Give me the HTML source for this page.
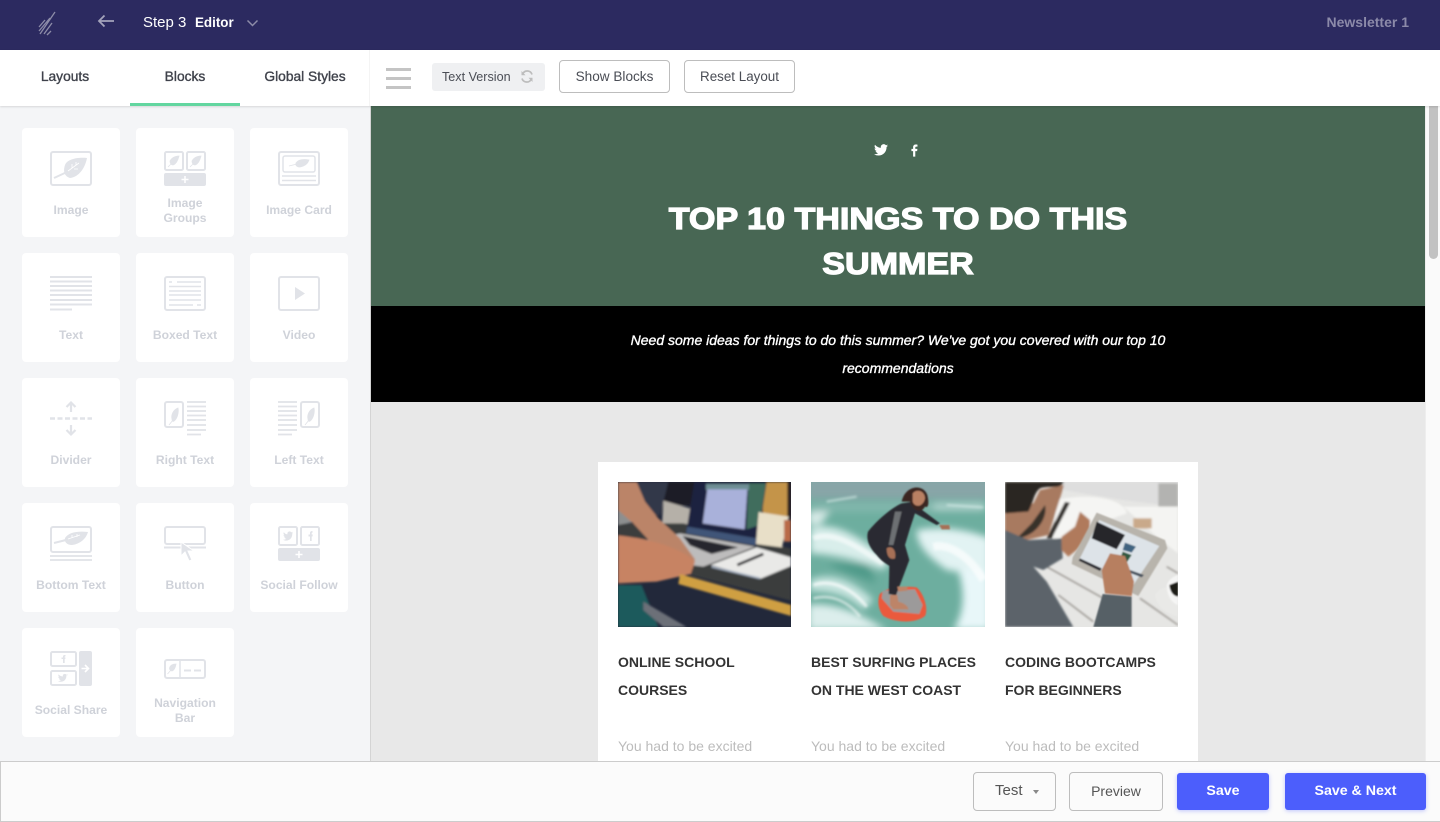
<!DOCTYPE html>
<html><head><meta charset="utf-8"><title>Editor</title>
<style>
*{box-sizing:border-box}
html,body{margin:0;padding:0;width:1440px;height:822px;overflow:hidden;background:#fff;font-family:"Liberation Sans",sans-serif}
.a{position:absolute}
.t{position:absolute;white-space:nowrap}
.card{position:absolute;width:98px;height:109px;background:#fff;border-radius:4px}
.card svg{position:absolute;left:28px;top:23px;width:42px;height:35px;overflow:visible}
.lb{position:absolute;left:-10px;right:-10px;top:74px;text-align:center;font-size:12.1px;font-weight:700;line-height:16px;color:#cfd2d9}
.lb.two{top:68px;line-height:15px}
.btn{position:absolute;border:1px solid #bdbdbd;border-radius:4px;background:#fff;color:#4a4d55;text-align:center}
.blue{position:absolute;background:#4c5efc;border-radius:3px;color:#fff;font-weight:700;font-size:14.2px;text-align:center;box-shadow:0 1px 4px rgba(76,94,252,.35)}
.ct{position:absolute;font-size:14px;font-weight:700;line-height:28px;color:#333;white-space:nowrap;top:648px}
.cb{position:absolute;font-size:14px;line-height:28px;color:#bcbcbc;white-space:nowrap;top:732px}
.tab{position:absolute;top:69px;text-align:center;font-size:13.8px;line-height:16px;color:#3f424b;-webkit-text-stroke:.35px #3f424b;white-space:nowrap}
svg{display:block}
</style></head><body>
<svg width="0" height="0" style="position:absolute"><defs>
<filter id="b0" x="-5%" y="-5%" width="110%" height="110%"><feGaussianBlur stdDeviation="2"/></filter>
<filter id="b1" x="-5%" y="-5%" width="110%" height="110%"><feGaussianBlur stdDeviation="3.5"/></filter>
<filter id="b2" x="-10%" y="-10%" width="120%" height="120%"><feGaussianBlur stdDeviation="11"/></filter>
<filter id="b3" x="-5%" y="-5%" width="110%" height="110%"><feGaussianBlur stdDeviation="4"/></filter>
</defs></svg>

<!-- main area -->
<div class="a" style="left:371px;top:106px;width:1054px;height:200px;background:#486754"></div>
<div class="a" style="left:371px;top:306px;width:1054px;height:96px;background:#000"></div>
<div class="a" style="left:371px;top:402px;width:1054px;height:360px;background:#e8e8e8"></div>
<div class="a" style="left:1425px;top:106px;width:15px;height:656px;background:#fafafa;border-left:1px solid #eee"></div>
<div class="a" style="left:1429px;top:106px;width:9px;height:153px;background:#c2c2c2;border-radius:0 0 5px 5px"></div>
<div class="a" style="left:598px;top:462px;width:600px;height:300px;background:#fff"></div>

<svg class="a" style="left:874px;top:144px" width="14" height="12" viewBox="0 0 24 20"><path fill="#fff" d="M24 2.4c-.9.4-1.8.7-2.8.8 1-.6 1.8-1.6 2.2-2.7-1 .6-2 1-3.1 1.2A4.9 4.9 0 0 0 11.900 6.200C7.800 6 4.200 4 1.700.9c-1.300 2.300-.6 5.200 1.500 6.600-.8 0-1.600-.2-2.200-.6 0 2.400 1.700 4.400 3.900 4.900-.7.2-1.500.2-2.200.1.600 2 2.400 3.400 4.600 3.400A9.900 9.900 0 0 1 0 17.300 14 14 0 0 0 7.500 19.500c9.100 0 14.300-7.700 14-14.600 1-.7 1.800-1.500 2.500-2.500z"/></svg>
<svg class="a" style="left:911px;top:144px" width="7" height="13" viewBox="0 0 8 14"><path fill="#fff" d="M2.400 14V7.700H.5V5.200h1.900V3.400C2.400 1.300 3.600.2 5.500.2c.9 0 1.700.1 1.900.1v2.200H6.100c-1 0-1.200.5-1.200 1.200v1.500h2.400l-.3 2.500H4.900V14z"/></svg>

<div class="t" style="left:371px;width:1054px;top:196px;text-align:center;color:#fff;font-size:31px;font-weight:700;line-height:45px;white-space:normal;-webkit-text-stroke:1.2px #fff;transform:scaleX(1.1)">TOP 10 THINGS TO DO THIS<br>SUMMER</div>
<div class="t" style="left:371px;width:1054px;top:326px;text-align:center;color:#fff;font-size:14px;font-style:italic;line-height:28px;white-space:normal;-webkit-text-stroke:.35px #fff">Need some ideas for things to do this summer? We've got you covered with our top 10<br>recommendations</div>

<!-- photo 1 -->
<svg class="a" style="left:618px;top:482px" width="173" height="145" viewBox="54 36 519 435">
<rect x="54" y="36" width="519" height="435" fill="#22283a"/>
<g filter="url(#b1)">
<rect x="190" y="36" width="100" height="70" fill="#1c1c26"/>
<path d="M100 36H205L180 135H100z" fill="#33394a"/>
<path d="M190 92L270 115 262 195 185 185z" fill="#b5b0a8"/>
<rect x="488" y="36" width="78" height="110" fill="#c4944a"/>
<rect x="562" y="36" width="11" height="110" fill="#2a2420"/>
<path d="M54 160H250L573 236V392L260 312 54 230z" fill="#3b3c3e"/>
<path d="M54 115H130L135 150 54 165z" fill="#8d8f8f"/>
<path d="M283 36H500L470 228 258 190z" fill="#1e2440"/>
<path d="M445 40H498L478 165 440 178z" fill="#3f6d5d"/>
<path d="M318 42H447V60H318z" fill="#6e8f95"/>
<path d="M322 58H442L434 178 308 160z" fill="#a9b1da"/>
<path d="M262 170L470 205 466 226 258 190z" fill="#3f5578"/>
<path d="M476 126L566 140 546 232 468 222z" fill="#e8dfc8"/>
<rect x="552" y="150" width="21" height="65" fill="#b96b46"/>
<path d="M120 215L240 190 465 230 310 290 270 285 170 235z" fill="#bdbcbc"/>
<path d="M248 198L415 232 335 252 270 226z" fill="#25272d"/>
<path d="M332 285L470 232 573 262V288L482 326z" fill="#e9e9e7"/>
<path d="M335 290L480 325" stroke="#a7b3c5" stroke-width="5"/>
<path d="M54 36H110L135 95 175 145 240 205 285 268 272 310 235 280 150 215 100 160 54 120z" fill="#bb8468"/>
<path d="M54 196C140 205 240 230 285 275L272 312 170 335 54 340z" fill="#c78363"/>
<path d="M240 312L573 405V438L235 342z" fill="#cf9f42"/>
<path d="M54 345H125L175 471H54z" fill="#1a5a5c"/>
<path d="M130 395L260 471H190L130 420z" fill="#6c7078"/>
<path d="M412 285L490 252" stroke="#1c1d22" stroke-width="8"/>
</g>
</svg>

<!-- photo 2 -->
<svg class="a" style="left:811px;top:482px" width="174" height="145" viewBox="633 36 522 435">
<rect x="633" y="36" width="522" height="435" fill="#6dae9f"/>
<g filter="url(#b2)">
<rect x="620" y="20" width="550" height="68" fill="#88a5a7"/>
<path d="M633 100H1155V125H633z" fill="#84b8ae"/>
<path d="M1000 100H1155V118H1000z" fill="#b9d8d3"/>
<path d="M625 125L690 125 660 165 625 165z" fill="#d8ebe8"/>
<path d="M630 175C720 150 790 215 870 270L850 300C780 270 710 255 630 250z" fill="#d9eeeb"/>
<path d="M950 180C1040 165 1120 185 1170 205V320L1040 300C1000 270 950 235 950 180z" fill="#e2f3f3"/>
<path d="M1075 300H1170V480H1060C1100 420 1090 350 1075 300z" fill="#e8f7f9"/>
<path d="M630 330C700 300 770 340 820 390L790 420C750 380 690 360 630 365z" fill="#c9e5e0"/>
<path d="M625 405C700 395 780 430 860 480H625z" fill="#dceeec"/>
<path d="M680 280H800L830 340 720 300z" fill="#4f9a89"/>
</g>
<g filter="url(#b3)">
<path d="M640 205C700 180 770 230 850 280" stroke="#fff" stroke-width="16" fill="none" opacity=".55"/>
<path d="M1000 230C1050 220 1110 260 1150 330" stroke="#fff" stroke-width="24" fill="none" opacity=".65"/>
<path d="M640 345C700 325 760 360 800 410" stroke="#fff" stroke-width="9" fill="none" opacity=".7"/>
<path d="M640 385C700 370 750 400 780 440" stroke="#fff" stroke-width="8" fill="none" opacity=".6"/>
<path d="M1040 105L1150 112M680 95L770 80" stroke="#d9ecea" stroke-width="6" fill="none" opacity=".7"/>
</g>
<g filter="url(#b0)">
<path d="M838 375C845 358 900 345 950 352 975 375 985 420 975 438 945 462 885 458 850 438 835 420 832 395 838 375z" fill="#ea5a3c"/>
<path d="M848 362L945 358 968 405 958 432 880 425 845 385z" fill="#9c9a9a"/>
<path d="M905 100C880 110 830 150 804 185 798 205 805 230 830 255 845 275 858 280 868 288L866 372 888 376 910 318 928 270 915 225 930 175 945 130 1010 165 1020 160 960 115 940 95z" fill="#2a2b30"/>
<path d="M885 125L905 125 880 225 866 225z" fill="#6d6f73"/>
<path d="M905 95C915 45 970 40 982 75 988 100 985 115 975 110 965 130 940 125 930 95z" fill="#3a2820"/>
<path d="M938 70C950 55 975 62 975 85 970 110 945 115 938 95z" fill="#b98064"/>
<path d="M860 235C875 225 890 240 885 265 875 270 860 265 860 235z" fill="#a66f56"/>
<path d="M1018 165L1048 165 1050 178 1025 178z" fill="#a66f56"/>
<path d="M870 375H892L895 395C915 400 925 410 925 418H880L870 405z" fill="#bd8468"/>
<path d="M892 350H922V362L895 365z" fill="#bd8468"/>
</g>
</svg>

<!-- photo 3 -->
<svg class="a" style="left:1005px;top:482px" width="173" height="145" viewBox="45 36 519 435">
<rect x="45" y="36" width="519" height="435" fill="#e6e6e4"/>
<g filter="url(#b1)">
<path d="M220 36H564V110L400 90 220 60z" fill="#dedede"/>
<rect x="505" y="40" width="59" height="70" fill="#b3b3b1"/>
<path d="M200 90C280 70 400 80 410 130L300 170 190 210z" fill="#f5f5f3"/>
<path d="M400 110H564V250L500 200z" fill="#f4f4f2"/>
<path d="M170 290L340 385M205 375L310 455M450 385L564 465M530 290L564 310" stroke="#77716b" stroke-width="3" fill="none"/>
<rect x="430" y="145" width="55" height="30" fill="#c9a98a"/>
<path d="M240 98L185 205H170L225 96z" fill="#35302e"/>
<path d="M45 120L130 100 150 60 222 45 210 85 175 195 110 210 45 190z" fill="#a87a60"/>
<path d="M45 36H222C210 60 180 45 150 55 130 70 130 100 115 125L45 130z" fill="#2a2724"/>
<path d="M165 105C175 140 140 200 80 205L125 160z" fill="#37302c"/>
<path d="M45 180L115 210 215 205 218 265 160 300 130 290 170 335 250 471H45z" fill="#5b646a"/>
<path d="M215 200L255 170 270 125 300 150 300 200 260 240 235 260 215 240z" fill="#b07a5c"/>
</g>
<g filter="url(#b0)">
<path d="M320 128L525 210 532 235 445 378 245 282 248 262z" fill="#b8b4ac"/>
<path d="M328 150L508 228 430 345 268 268z" fill="#dde3e8"/>
<path d="M320 155L405 195 380 238 305 205z" fill="#26272c"/>
<path d="M405 218L438 230 425 248 398 240z" fill="#3f6480"/>
<path d="M398 245L425 255 410 278 390 268z" fill="#2e5840"/>
<path d="M270 265L335 295 330 303 266 272z" fill="#2a2c30"/>
<path d="M420 300L462 315 455 322 418 308z" fill="#4b5460"/>
<path d="M335 300L360 250 405 258 432 335 425 378 345 370z" fill="#b77f60"/>
<path d="M338 372L425 380 425 471H310z" fill="#566066"/>
<path d="M495 375C515 340 564 350 564 360V440C530 430 500 410 495 375z" fill="#e9e9e7"/>
<path d="M530 345C540 320 564 315 564 315V405C545 400 530 375 530 345z" fill="#f5f5f4"/>
<path d="M538 345L564 335V380C550 378 540 365 538 345z" fill="#1e1a18"/>
</g>
</svg>

<div class="ct" style="left:618px">ONLINE SCHOOL<br>COURSES</div>
<div class="ct" style="left:811px">BEST SURFING PLACES<br>ON THE WEST COAST</div>
<div class="ct" style="left:1005px">CODING BOOTCAMPS<br>FOR BEGINNERS</div>
<div class="cb" style="left:618px">You had to be excited</div>
<div class="cb" style="left:811px">You had to be excited</div>
<div class="cb" style="left:1005px">You had to be excited</div>

<!-- sidebar -->
<div class="a" style="left:0;top:106px;width:371px;height:656px;background:#f4f5f7;border-right:1px solid #d4d4d4"></div>

<div class="card" style="left:22px;top:128px"><svg viewBox="0 0 42 35"><rect x="1" y="1" width="40" height="33" rx="2" fill="none" stroke="#e1e3e8" stroke-width="2"/><path d="M37 7C28 6 17 8 15 14 13 20 14 25 20 27 29 26 35 17 37 7z" fill="#e1e3e8"/><path d="M4 27L17 21" stroke="#e1e3e8" stroke-width="2"/><path d="M18 20L29 12M22 13V17M26 11V14M24 18H28" stroke="#fff" stroke-width=".8"/></svg><div class="lb">Image</div></div>

<div class="card" style="left:136px;top:128px"><svg viewBox="0 0 42 35"><rect x="1" y="1" width="18" height="18" rx="1.500" fill="none" stroke="#e1e3e8" stroke-width="2"/><rect x="23" y="1" width="18" height="18" rx="1.500" fill="none" stroke="#e1e3e8" stroke-width="2"/><path d="M15 5C10 5 7 8 6 10 6 12 7 14 9 14 12 13 14 9 15 5zM4 16L8 12" fill="#e1e3e8" stroke="#e1e3e8" stroke-width=".8"/><path d="M37 5C32 5 29 8 28 10 28 12 29 14 31 14 34 13 36 9 37 5zM26 16L30 12" fill="#e1e3e8" stroke="#e1e3e8" stroke-width=".8"/><rect y="22" width="42" height="13" rx="2" fill="#e1e3e8"/><path d="M21 25V32M17.500 28.500H24.500" stroke="#fff" stroke-width="1.500"/></svg><div class="lb two">Image<br>Groups</div></div>

<div class="card" style="left:250px;top:128px"><svg viewBox="0 0 42 35"><rect x="1" y="1" width="40" height="33" rx="2" fill="none" stroke="#e1e3e8" stroke-width="2"/><rect x="5" y="5" width="32" height="16" rx="2" fill="none" stroke="#e1e3e8" stroke-width="1.500"/><path d="M31 9C25 8 20 9 18 12 17 15 20 16 22 16 27 15 30 12 31 9zM11 15L19 13" fill="#e1e3e8" stroke="#e1e3e8" stroke-width=".8"/><path d="M4 25H38M4 29.500H38" stroke="#e1e3e8" stroke-width="1.500"/></svg><div class="lb">Image Card</div></div>

<div class="card" style="left:22px;top:253px"><svg viewBox="0 0 42 35"><path d="M0 1H42M0 5.500H42M0 10H42M0 14.500H42M0 19H42M0 24H42M0 28.500H42M0 33.500H22" stroke="#e1e3e8" stroke-width="2"/></svg><div class="lb">Text</div></div>

<div class="card" style="left:136px;top:253px"><svg viewBox="0 0 42 35"><rect x="1" y="1" width="40" height="33" rx="2" fill="none" stroke="#e1e3e8" stroke-width="2"/><path d="M5 6H8M13 6H37M5 10.500H37M5 15H37M5 19H37M5 24H37M5 29H29M33 29H37" stroke="#e1e3e8" stroke-width="1.500"/></svg><div class="lb">Boxed Text</div></div>

<div class="card" style="left:250px;top:253px"><svg viewBox="0 0 42 35"><rect x="1" y="1" width="40" height="33" rx="2" fill="none" stroke="#e1e3e8" stroke-width="2"/><path d="M17 11L27 17.500 17 24z" fill="#e1e3e8"/></svg><div class="lb">Video</div></div>

<div class="card" style="left:22px;top:378px"><svg viewBox="0 0 42 35"><path d="M0 17.500H42" stroke="#e1e3e8" stroke-width="2.500" stroke-dasharray="5 2.500"/><path d="M21 11V2M16.500 6L21 1.500 25.500 6M21 24V33M16.500 29L21 33.500 25.500 29" stroke="#e1e3e8" stroke-width="2.200" fill="none"/></svg><div class="lb">Divider</div></div>

<div class="card" style="left:136px;top:378px"><svg viewBox="0 0 42 35"><rect x="1" y="1" width="18" height="25" rx="2" fill="none" stroke="#e1e3e8" stroke-width="2"/><path d="M14 7C9 9 7 14 8 18 8 20 9 21 10 20 13 18 15 12 14 7zM5 24L9 19" fill="#e1e3e8" stroke="#e1e3e8" stroke-width=".8"/><path d="M23 1H42M23 5.500H42M23 10H42M23 14.500H42M23 19H42M23 24H42M23 29H42M23 33.500H37" stroke="#e1e3e8" stroke-width="1.800"/></svg><div class="lb">Right Text</div></div>

<div class="card" style="left:250px;top:378px"><svg viewBox="0 0 42 35"><rect x="23" y="1" width="18" height="25" rx="2" fill="none" stroke="#e1e3e8" stroke-width="2"/><path d="M36 7C31 9 29 14 30 18 30 20 31 21 32 20 35 18 37 12 36 7zM27 24L31 19" fill="#e1e3e8" stroke="#e1e3e8" stroke-width=".8"/><path d="M0 1H19M0 5.500H19M0 10H19M0 14.500H19M0 19H19M0 24H19M0 29H19M0 33.500H14" stroke="#e1e3e8" stroke-width="1.800"/></svg><div class="lb">Left Text</div></div>

<div class="card" style="left:22px;top:503px"><svg viewBox="0 0 42 35"><rect x="1" y="1" width="40" height="25" rx="2" fill="none" stroke="#e1e3e8" stroke-width="2"/><path d="M38 6C28 5 19 6 15 12 14 16 17 19 22 19 30 18 36 13 38 6z" fill="#e1e3e8"/><path d="M4 17L16 14" stroke="#e1e3e8" stroke-width="2"/><path d="M18 13L30 9M22 9V12M27 8V11" stroke="#fff" stroke-width=".8"/><path d="M0 30H42M0 34H42" stroke="#e1e3e8" stroke-width="1.800"/></svg><div class="lb">Bottom Text</div></div>

<div class="card" style="left:136px;top:503px"><svg viewBox="0 0 42 35"><rect x="1" y="1" width="40" height="17" rx="2" fill="none" stroke="#e1e3e8" stroke-width="2"/><path d="M0 21.500H42" stroke="#e1e3e8" stroke-width="2"/><path d="M17 16V30L21 26 25 35 28 34 24 25H30z" fill="#e1e3e8" stroke="#fff" stroke-width="1"/></svg><div class="lb">Button</div></div>

<div class="card" style="left:250px;top:503px"><svg viewBox="0 0 42 35"><rect x="1" y="1" width="18" height="18" rx="1.500" fill="none" stroke="#e1e3e8" stroke-width="2"/><rect x="23" y="1" width="18" height="18" rx="1.500" fill="none" stroke="#e1e3e8" stroke-width="2"/><path d="M15 6.500c-.4.2-.9.300-1.300.4.500-.3.800-.7 1-1.200-.4.300-.9.400-1.400.5a2.200 2.200 0 0 0-3.800 2C8.500 8.600 6.900 7.700 5.800 6.300c-.6 1-.3 2.300.7 3-.4 0-.7-.1-1-.3 0 1.100.8 2 1.800 2.200-.3.100-.7.100-1 0 .3.900 1.100 1.500 2.100 1.500A4.500 4.500 0 0 1 5 13.700c3.500 2.200 9.500.3 9.300-6.200.3-.3.600-.6.700-1z" fill="#e1e3e8"/><path d="M32 15V10.500H30.500V8.500H32V7C32 5.500 33 5 34.500 5V6.700C33.700 6.700 33.700 7 33.700 7.500V8.500H34.800L34.500 10.500H33.700V15z" fill="#e1e3e8"/><rect y="22" width="42" height="13" rx="2" fill="#e1e3e8"/><path d="M21 25V32M17.500 28.500H24.500" stroke="#fff" stroke-width="1.500"/></svg><div class="lb">Social Follow</div></div>

<div class="card" style="left:22px;top:628px"><svg viewBox="0 0 42 35"><rect x="1" y="1" width="25" height="14" rx="1.500" fill="none" stroke="#e1e3e8" stroke-width="2"/><rect x="1" y="20" width="25" height="14" rx="1.500" fill="none" stroke="#e1e3e8" stroke-width="2"/><rect x="29" y="0" width="13" height="35" rx="2" fill="#e1e3e8"/><path d="M31.500 17.500H38M35 14L38.500 17.500 35 21" stroke="#fff" stroke-width="1.600" fill="none"/><path d="M13 12V8H11.500V6.500H13V5.500C13 4.200 14 4 15.500 4V5.400C14.700 5.400 14.700 5.700 14.700 6V6.500H15.500L15.300 8H14.700V12z" fill="#e1e3e8"/><path d="M18 24c-.4.200-.8.300-1.200.3.400-.3.800-.6.900-1.100-.4.200-.8.400-1.300.5a2 2 0 0 0-3.500 1.800C11 25.400 9.600 24.600 8.600 23.400c-.5.900-.3 2.100.6 2.700-.3 0-.6-.1-.9-.3 0 1 .7 1.800 1.600 2-.3.100-.6.100-.9 0 .3.800 1 1.400 1.900 1.400A4 4 0 0 1 8 30c3.200 2 8.600.3 8.400-5.600.3-.2.500-.5.600-.4z" fill="#e1e3e8"/></svg><div class="lb">Social Share</div></div>

<div class="card" style="left:136px;top:628px"><svg viewBox="0 0 42 35"><rect x="1" y="9" width="40" height="18" rx="2" fill="none" stroke="#e1e3e8" stroke-width="2"/><path d="M16 9V27" stroke="#e1e3e8" stroke-width="1.500"/><path d="M12 13C8 13 6 15 5.500 17 5.500 19 7 20 8 20 10.500 19 11.500 16 12 13zM3.500 23L7 19" fill="#e1e3e8" stroke="#e1e3e8" stroke-width=".8"/><path d="M20 19.500H27M30 19.500H37" stroke="#e1e3e8" stroke-width="2"/></svg><div class="lb two">Navigation<br>Bar</div></div>

<!-- top bar -->
<div class="a" style="left:0;top:0;width:1440px;height:50px;background:#2c2a60"></div>
<svg class="a" style="left:36px;top:9px" width="22" height="28" viewBox="0 0 22 28"><path d="M3 18L9 11M3 22L14 9M4 25L19 3M8 25L16 14M11 26L15 22" stroke="#8d8ca8" stroke-width="1.300" fill="none"/></svg>
<svg class="a" style="left:97px;top:14px" width="18" height="14" viewBox="0 0 18 14"><path d="M17 7H2M7.500 1.500L2 7 7.500 12.500" stroke="#a4a3bb" stroke-width="1.800" fill="none"/></svg>
<div class="t" style="left:143px;top:14px;color:#fff;font-size:15px;line-height:17px">Step 3</div>
<div class="t" style="left:195px;top:14px;color:#fff;font-size:13.4px;font-weight:700;line-height:17px">Editor</div>
<svg class="a" style="left:246px;top:19px" width="13" height="8" viewBox="0 0 13 8"><path d="M1.500 1.500L6.500 6.500 11.500 1.500" stroke="#8d8ca8" stroke-width="1.500" fill="none"/></svg>
<div class="t" style="right:31px;top:14px;color:#8c8aa9;font-size:14px;font-weight:700;line-height:17px">Newsletter 1</div>

<!-- toolbar -->
<div class="a" style="left:0;top:50px;width:1440px;height:56px;background:#fff;box-shadow:0 1px 2px rgba(0,0,0,.12)"></div>
<div class="a" style="left:369px;top:50px;width:1px;height:56px;background:#f4f4f4"></div>
<div class="tab" style="left:0;width:130px">Layouts</div>
<div class="tab" style="left:130px;width:110px">Blocks</div>
<div class="tab" style="left:240px;width:130px">Global Styles</div>
<div class="a" style="left:130px;top:103px;width:110px;height:3px;background:#63d6a0"></div>
<div class="a" style="left:386px;top:68px;width:25px;height:3px;background:#c4c4c4"></div>
<div class="a" style="left:386px;top:77px;width:25px;height:3px;background:#c4c4c4"></div>
<div class="a" style="left:386px;top:86px;width:25px;height:3px;background:#c4c4c4"></div>
<div class="a" style="left:432px;top:63px;width:113px;height:28px;background:#eff0f2;border-radius:3px"></div>
<div class="t" style="left:442px;top:69px;font-size:12.6px;line-height:16px;color:#4a4d55">Text Version</div>
<svg class="a" style="left:520px;top:70px" width="14" height="13" viewBox="0 0 14 13"><path d="M12 4.500A5 5 0 0 0 3 3.300M2 8.500A5 5 0 0 0 11 9.700" stroke="#bdbdbd" stroke-width="1.700" fill="none"/><path d="M1.500 1V5.200H5.500zM12.500 12V7.800H8.500z" fill="#bdbdbd"/></svg>
<div class="btn" style="left:559px;top:60px;width:111px;height:33px;font-size:13.6px;line-height:31px">Show Blocks</div>
<div class="btn" style="left:684px;top:60px;width:111px;height:33px;font-size:13.4px;line-height:31px">Reset Layout</div>

<!-- bottom bar -->
<div class="a" style="left:0;top:761px;width:1440px;height:61px;background:#fbfbfb;border-top:1px solid #ccc;border-bottom:1px solid #ccc;border-left:1px solid #ccc"></div>
<div class="btn" style="left:973px;top:772px;width:83px;height:39px;background:#fbfbfb;font-size:14px;line-height:37px"></div>
<div class="t" style="left:995px;top:782px;font-size:15px;line-height:18px;color:#555">Test</div>
<div class="a" style="left:1033px;top:790px;border:3px solid transparent;border-top:4px solid #888;border-bottom:0"></div>
<div class="btn" style="left:1069px;top:772px;width:94px;height:39px;background:#fbfbfb;font-size:14px;line-height:37px;color:#555">Preview</div>
<div class="blue" style="left:1177px;top:773px;width:92px;height:37px;line-height:37px">Save</div>
<div class="blue" style="left:1285px;top:773px;width:141px;height:37px;line-height:37px">Save &amp; Next</div>
</body></html>
